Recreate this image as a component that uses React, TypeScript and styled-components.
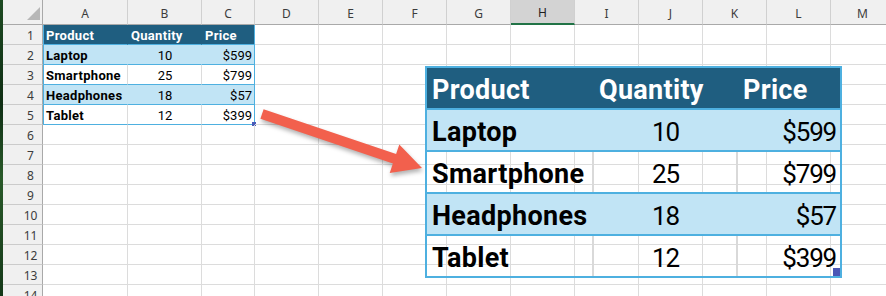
import React from "react";
import styled, { createGlobalStyle, css } from "styled-components";

type Tone = "head" | "band" | "plain";
type Align = "left" | "center" | "right";

const HEAD = "#1f5e80";
const BAND = "#c1e4f5";
const LINE = "#4eb0e0";
const GRID = "#dcdcdc";

const GlobalStyle = createGlobalStyle`
    html, body {
        margin: 0;
        padding: 0;
        background: #ffffff;
        overflow: hidden;
    }
    #root {
        width: 886px;
        height: 296px;
    }
`;

const columns = [
    { name: "A", width: 85 },
    { name: "B", width: 74 },
    { name: "C", width: 53 },
    { name: "D", width: 64 },
    { name: "E", width: 64 },
    { name: "F", width: 64 },
    { name: "G", width: 64 },
    { name: "H", width: 64 },
    { name: "I", width: 64 },
    { name: "J", width: 64 },
    { name: "K", width: 64 },
    { name: "L", width: 64 },
    { name: "M", width: 64 },
];

const rowCount = 14;
const selectedColumn = "H";

const table = [
    ["Product", "Quantity", "Price"],
    ["Laptop", "10", "$599"],
    ["Smartphone", "25", "$799"],
    ["Headphones", "18", "$57"],
    ["Tablet", "12", "$399"],
];

const toneOf = (row: number): Tone => (row === 0 ? "head" : row % 2 === 1 ? "band" : "plain");
const alignOf = (row: number, col: number): Align =>
    row === 0 || col === 0 ? "left" : col === 1 ? "center" : "right";

const fillOf = (tone?: Tone) => (tone === "head" ? HEAD : tone === "band" ? BAND : "transparent");

const App = () => {
    return (
        <>
            <GlobalStyle />
            <Screen>
                <DesktopStrip />
                <Sheet>
                    <CornerCell>
                        <CornerMark />
                    </CornerCell>
                    {columns.map((c) => (
                        <ColHeader key={c.name} $selected={c.name === selectedColumn}>
                            {c.name}
                        </ColHeader>
                    ))}

                    {Array.from({ length: rowCount }, (_, r) => (
                        <React.Fragment key={r}>
                            <RowHeader>{r + 1}</RowHeader>
                            {columns.map((c, ci) => {
                                const inTable = r < table.length && ci < 3;
                                if (!inTable) return <Cell key={c.name} />;
                                const tone = toneOf(r);
                                const numeric = r > 0 && ci > 0;
                                return (
                                    <Cell
                                        key={c.name}
                                        $tone={tone}
                                        $align={alignOf(r, ci)}
                                        $numeric={numeric}
                                        $edgeLeft={ci === 0}
                                        $edgeRight={ci === 2}
                                        $edgeBottom
                                    >
                                        {table[r][ci]}
                                        {r === table.length - 1 && ci === 2 && <SmallHandle />}
                                    </Cell>
                                );
                            })}
                        </React.Fragment>
                    ))}
                </Sheet>

                <Arrow viewBox="0 0 886 296" xmlns="http://www.w3.org/2000/svg">
                    <polygon
                        points="263.6,109.3 396.1,154 399.3,144.5 422,168 389.7,172.9 392.9,163.4 260.4,118.7"
                        fill="#f2604d"
                    />
                </Arrow>

                <PictureTable>
                    {table.map((row, r) => (
                        <PicRow key={r} $tone={toneOf(r)} $last={r === table.length - 1}>
                            {row.map((text, ci) => (
                                <PicCell
                                    key={ci}
                                    $tone={toneOf(r)}
                                    $align={alignOf(r, ci)}
                                    $numeric={r > 0 && ci > 0}
                                    $lastCol={ci === 2}
                                >
                                    {text}
                                </PicCell>
                            ))}
                        </PicRow>
                    ))}
                    <PicHandle />
                </PictureTable>
            </Screen>
        </>
    );
};

const Screen = styled.div`
    position: relative;
    display: flex;
    flex-direction: row;
    width: 886px;
    height: 296px;
    overflow: hidden;
`;

const DesktopStrip = styled.div`
    flex: 0 0 3px;
    height: 100%;
    background: linear-gradient(180deg, #1d4a22 0%, #0f2e14 35%, #2a5a2a 60%, #143818 100%);
`;

const Sheet = styled.div`
    display: grid;
    grid-template-columns: 40px ${columns.map((c) => `${c.width}px`).join(" ")};
    grid-template-rows: 25px repeat(${rowCount}, 20px);
    flex: 0 0 auto;
`;

const headerText = css`
    font-family: "Noto Sans", "Open Sans", sans-serif;
    font-size: 12px;
    color: #3c3c3c;
    box-sizing: border-box;
    background: #f0f0f0;
`;

const CornerCell = styled.div`
    ${headerText};
    display: flex;
    align-items: flex-end;
    justify-content: flex-end;
    padding: 0 2px 4px 0;
    border-right: 1px solid #a9a9a9;
    border-bottom: 1px solid #a9a9a9;
`;

const CornerMark = styled.span`
    width: 0;
    height: 0;
    border-left: 13px solid transparent;
    border-bottom: 13px solid #b7b7b7;
`;

const ColHeader = styled.div<{ $selected?: boolean }>`
    ${headerText};
    display: flex;
    align-items: center;
    justify-content: center;
    padding-top: 2px;
    border-right: 1px solid #d0d0d0;
    border-bottom: 1px solid #a9a9a9;
    ${(p) =>
        p.$selected &&
        css`
            background: #d3d3d3;
            color: #1f1f1f;
            border-bottom: 2px solid #217346;
        `}
`;

const RowHeader = styled.div`
    ${headerText};
    display: flex;
    align-items: center;
    justify-content: center;
    padding: 1px 0 0 16px;
    border-right: 1px solid #a9a9a9;
    border-bottom: 1px solid #cbcbcb;
`;

const Cell = styled.div<{
    $tone?: Tone;
    $align?: Align;
    $numeric?: boolean;
    $edgeLeft?: boolean;
    $edgeRight?: boolean;
    $edgeBottom?: boolean;
}>`
    position: relative;
    box-sizing: border-box;
    display: flex;
    align-items: center;
    justify-content: ${(p) =>
        p.$align === "center" ? "center" : p.$align === "right" ? "flex-end" : "flex-start"};
    padding: 2px 2px 0 3px;
    white-space: nowrap;
    font-family: Roboto, "Liberation Sans", sans-serif;
    font-size: 13px;
    font-weight: ${(p) => (p.$numeric ? 400 : 700)};
    letter-spacing: ${(p) => (p.$numeric ? "0" : "0.3px")};
    color: ${(p) => (p.$tone === "head" ? "#ffffff" : "#000000")};
    background: ${(p) => fillOf(p.$tone)};
    border-right: 1px solid
        ${(p) =>
            p.$edgeRight ? LINE : p.$tone && p.$tone !== "plain" ? fillOf(p.$tone) : GRID};
    border-bottom: 1px solid ${(p) => (p.$edgeBottom ? LINE : GRID)};
    box-shadow: ${(p) => (p.$edgeLeft ? `inset 1px 0 0 ${LINE}` : "none")};
`;

const SmallHandle = styled.span`
    position: absolute;
    right: -2px;
    bottom: -2px;
    width: 4px;
    height: 4px;
    background: #4a5bb8;
`;

const Arrow = styled.svg`
    position: absolute;
    left: 0;
    top: 0;
    width: 886px;
    height: 296px;
    pointer-events: none;
    filter: drop-shadow(1px 3px 2px rgba(0, 0, 0, 0.3));
`;

const PictureTable = styled.div`
    position: absolute;
    left: 425px;
    top: 66px;
    width: 417px;
    height: 212px;
    box-sizing: border-box;
    border: 2px solid ${LINE};
    display: flex;
    flex-direction: column;
`;

const PicRow = styled.div<{ $tone: Tone; $last?: boolean }>`
    display: grid;
    grid-template-columns: 167px 144px 102px;
    height: ${(p) => (p.$last ? "40px" : "42px")};
    box-sizing: border-box;
    background: ${(p) => fillOf(p.$tone)};
    border-bottom: ${(p) => (p.$last ? "none" : `2px solid ${LINE}`)};
`;

const PicCell = styled.div<{ $tone: Tone; $align: Align; $numeric?: boolean; $lastCol?: boolean }>`
    box-sizing: border-box;
    display: flex;
    align-items: center;
    justify-content: ${(p) =>
        p.$align === "center" ? "center" : p.$align === "right" ? "flex-end" : "flex-start"};
    padding: 4px 4px 0 5px;
    white-space: nowrap;
    font-family: Roboto, "Liberation Sans", sans-serif;
    font-size: ${(p) => (p.$numeric ? "26px" : "27px")};
    font-weight: ${(p) => (p.$numeric ? 400 : 700)};
    letter-spacing: ${(p) => (p.$numeric ? "-1.2px" : "0.3px")};
    color: ${(p) => (p.$tone === "head" ? "#ffffff" : "#000000")};
    border-right: ${(p) =>
        p.$lastCol ? "none" : `2px solid ${p.$tone === "plain" ? "#d9d9d9" : fillOf(p.$tone)}`};
`;

const PicHandle = styled.span`
    position: absolute;
    right: 0;
    bottom: 0;
    width: 7px;
    height: 8px;
    background: #4a56b6;
`;

export default App;
